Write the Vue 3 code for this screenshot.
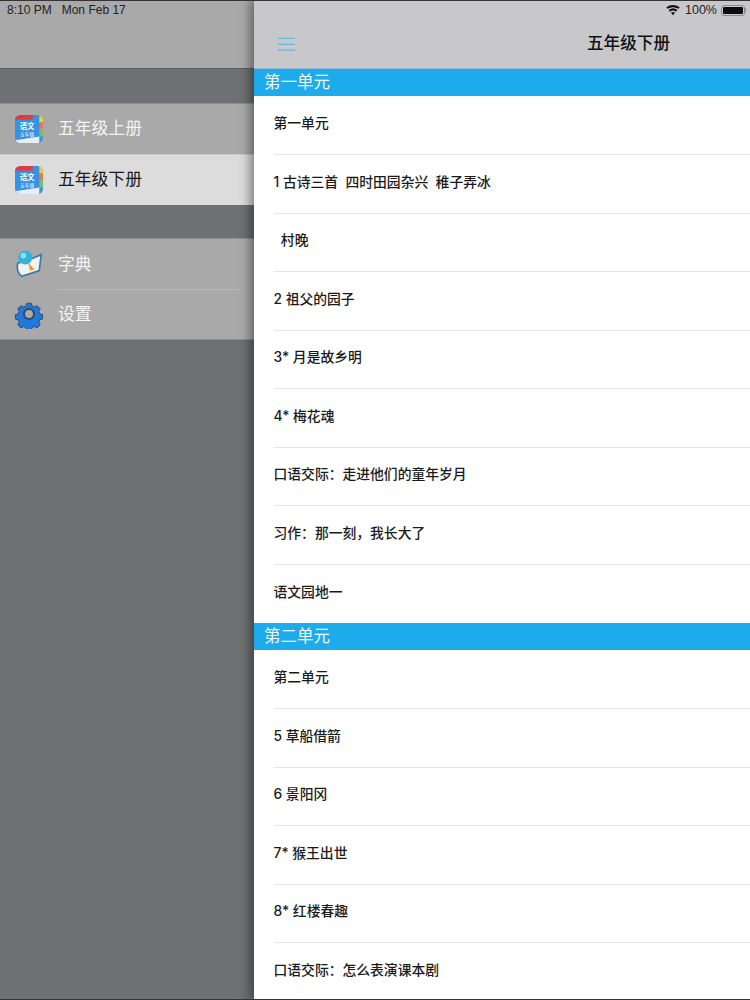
<script setup>
const bookItems = [
  { label: '五年级上册', active: false },
  { label: '五年级下册', active: true },
]
const sections = [
  {
    title: '第一单元',
    rows: ['第一单元', '1 古诗三首  四时田园杂兴  稚子弄冰', '  村晚', '2 祖父的园子', '3* 月是故乡明', '4* 梅花魂', '口语交际：走进他们的童年岁月', '习作：那一刻，我长大了', '语文园地一'],
  },
  {
    title: '第二单元',
    rows: ['第二单元', '5 草船借箭', '6 景阳冈', '7* 猴王出世', '8* 红楼春趣', '口语交际：怎么表演课本剧'],
  },
]
</script>

<template>
  <div class="screen">
    <aside class="side">
      <div class="side-head">
        <span class="time">8:10 PM</span>
        <span class="time">Mon Feb 17</span>
      </div>

      <div class="group first">
        <div v-for="item in bookItems" :key="item.label" class="item" :class="{ active: item.active }">
          <svg class="icon" viewBox="0 0 32 32">
            <defs>
              <clipPath id="appclip"><rect x="1" y="1" width="30" height="30" rx="6" /></clipPath>
            </defs>
            <g clip-path="url(#appclip)">
              <rect x="1" y="1" width="30" height="30" fill="#3593e4" />
              <rect x="1" y="1" width="19" height="5" fill="#e23a3f" />
              <rect x="27" y="1" width="4" height="8" fill="#f3d02f" />
              <rect x="27" y="9" width="4" height="7" fill="#e8785a" />
              <rect x="27" y="16" width="4" height="8" fill="#7dbb6f" />
              <path d="M1 28 L27 24 L27 31 L1 31Z" fill="#e8eef4" />
              <text x="14" y="15.500" class="app-big">语文</text>
              <text x="14" y="23" class="app-small">五年级</text>
            </g>
          </svg>
          <span class="label">{{ item.label }}</span>
        </div>
      </div>

      <div class="group second">
        <div class="item tool">
          <svg class="icon" viewBox="0 0 32 32">
            <path d="M4 15 L15 12 L29 6 L27 23 L18 26 L8 29 Q2 24 4 15Z" fill="#f2f2ee" stroke="#3f78ad" stroke-width="1.800" />
            <path d="M15 14 L22 22 L17 23Z" fill="#ee9a33" />
            <circle cx="12" cy="9" r="7.500" fill="#33b3dc" />
            <circle cx="10" cy="7" r="3" fill="#8ee0ee" />
          </svg>
          <span class="label">字典</span>
        </div>
        <div class="item tool">
          <svg class="icon" viewBox="0 0 32 32">
            <path d="M13 2.500h6l1 3.600 2.700 1.200 3.400-1.800 4 4-1.800 3.400 1.200 2.800 3.500 1v5.600l-3.500 1-1.200 2.800 1.800 3.400-4 4-3.400-1.800-2.700 1.200-1 3.600h-6l-1-3.600-2.700-1.200-3.400 1.800-4-4 1.800-3.400-1.200-2.800-3.500-1v-5.600l3.500-1 1.200-2.800-1.800-3.400 4-4 3.400 1.800 2.700-1.200z" transform="translate(2.400 2.400) scale(.85)" fill="#1f78dc" stroke="#33485f" stroke-width="1.200" stroke-linejoin="round" />
            <circle cx="16" cy="16" r="6.400" fill="#33485f" />
            <circle cx="16" cy="16" r="4.200" fill="#a9a9aa" />
          </svg>
          <span class="label">设置</span>
        </div>
      </div>
    </aside>

    <main class="main">
      <header class="main-head">
        <div class="status">
          <svg class="wifi" viewBox="0 0 16 12">
            <path d="M8 11.500 L5.700 8.700 Q8 6.900 10.300 8.700Z M4.500 7.300 L3 5.500 Q8 1.600 13 5.500 L11.500 7.300 Q8 4.600 4.500 7.300Z M1.800 4.100 L.3 2.300 Q8 -2.600 15.700 2.300 L14.200 4.100 Q8 .2 1.800 4.100Z" fill="#111" />
          </svg>
          <span class="pct">100%</span>
          <span class="battery"><span class="battery-fill"></span></span>
          <span class="battery-tip"></span>
        </div>
        <div class="bar">
          <svg class="menu" viewBox="0 0 18 15">
            <path d="M0 1h18M0 7.300h18M0 13.500h18" stroke="#4fb3e0" stroke-width="1" fill="none" />
          </svg>
          <h1 class="title">五年级下册</h1>
        </div>
      </header>

      <section v-for="section in sections" :key="section.title">
        <div class="section-title">{{ section.title }}</div>
        <div v-for="(row, index) in section.rows" :key="index" class="row">
          <span class="row-text">{{ row }}</span>
        </div>
      </section>
    </main>
  </div>
</template>

<style scoped>
.screen {
  position: relative;
  display: flex;
  width: 750px;
  height: 1000px;
  overflow: hidden;
  background: #fff;
  font-family: "Liberation Sans", "Noto Sans CJK SC", sans-serif;
}
.screen::after {
  content: "";
  position: absolute;
  inset: 0;
  border-top: 1px solid #333436;
  border-bottom: 1px solid #333436;
  pointer-events: none;
}
.side {
  flex: 0 0 254px;
  background: #6f7071;
}
.side-head {
  display: flex;
  gap: 10px;
  box-sizing: border-box;
  height: 69px;
  padding: 2px 0 0 7px;
  background: #a9a9aa;
  border-bottom: 1px solid #5c5d5d;
}
.time {
  font-size: 12px;
  line-height: 17px;
  color: #222;
}
.group {
  background: #a9a9aa;
  border-top: 1px solid #8e8e8f;
  border-bottom: 1px solid #8e8e8f;
}
.group.first {
  margin-top: 34px;
}
.group.second {
  margin-top: 33px;
}
.item {
  display: flex;
  align-items: center;
  gap: 14px;
  height: 50px;
  padding-left: 14px;
  color: #f4f4f4;
}
.item.active {
  background: #dcdcdd;
  color: #1a1a1a;
  border-top: 1px solid #c8c8c9;
  margin-bottom: -1px;
}
.tool {
  position: relative;
}
.tool + .tool::before {
  content: "";
  position: absolute;
  top: 0;
  left: 58px;
  right: 14px;
  height: 1px;
  background: #b9b9ba;
}
.tool .label {
  padding-top: 2px;
}
.icon {
  flex: none;
  width: 30px;
  height: 30px;
}
.app-big {
  font-size: 8px;
  font-weight: 700;
  fill: #fff;
  text-anchor: middle;
}
.app-small {
  font-size: 5px;
  fill: #fff;
  text-anchor: middle;
}
.label {
  font-size: 16.800px;
  line-height: 24px;
}
.main {
  position: relative;
  flex: 0 0 496px;
  background: #fff;
  box-shadow: -4px 0 10px rgba(0, 0, 0, 0.42);
}
.main-head {
  box-sizing: border-box;
  height: 69px;
  background: #c8c8ca;
  border-bottom: 1px solid #8fb8d0;
}
.status {
  display: flex;
  align-items: center;
  justify-content: flex-end;
  height: 20px;
  padding-right: 4px;
}
.wifi {
  width: 14px;
  height: 11px;
  margin-right: 5px;
}
.pct {
  font-size: 12.500px;
  color: #222;
  margin-right: 4px;
}
.battery {
  box-sizing: border-box;
  display: flex;
  width: 24px;
  height: 11px;
  padding: 1px;
  border: 1px solid #8b8b8c;
  border-radius: 3px;
}
.battery-fill {
  flex: 1;
  background: #0c0c0c;
  border-radius: 1px;
}
.battery-tip {
  width: 1px;
  height: 4px;
  background: #8b8b8c;
}
.bar {
  display: flex;
  align-items: center;
  height: 48px;
  padding: 0 80px 0 24px;
}
.menu {
  width: 17px;
  height: 15px;
}
.title {
  margin: 0 0 0 auto;
  font-size: 16.600px;
  font-weight: 500;
  line-height: 24px;
  color: #111;
}
.section-title {
  box-sizing: border-box;
  height: 27px;
  margin-bottom: 0.500px;
  padding-left: 10px;
  background: #1dabec;
  color: #f2fbff;
  font-size: 16.500px;
  line-height: 27px;
}
.row {
  box-sizing: border-box;
  display: flex;
  align-items: center;
  height: 58.500px;
  margin-left: 20px;
  padding-bottom: 4px;
  border-bottom: 1px solid #e4e4e6;
}
.row:last-child {
  border-bottom: 0;
}
.row-text {
  margin-left: -0.500px;
  font-family: Inter, "Noto Sans CJK SC", sans-serif;
  font-size: 13.800px;
  font-weight: 500;
  line-height: 20px;
  color: #1a1a1a;
  white-space: pre;
}
</style>
